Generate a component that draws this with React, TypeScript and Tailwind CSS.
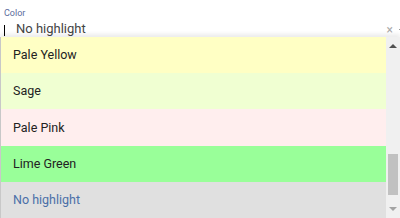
import { memo } from "react";

const options = [
  { label: "Pale Yellow", bg: "bg-[#ffffc4]" },
  { label: "Sage", bg: "bg-[#f0ffd2]" },
  { label: "Pale Pink", bg: "bg-[#ffeeee]" },
  { label: "Lime Green", bg: "bg-[#99ff99]" },
];

export default memo(function App() {
  return (
    <div className="relative h-[218px] w-[400px] overflow-hidden bg-white font-['Roboto',sans-serif]">
      {/* Field */}
      <div className="pl-1 pt-[7px]">
        <div className="text-[9px] leading-[12px] text-[#5b6b9b]">Color</div>
        <div className="flex h-[20px] items-center">
          <span className="mt-[2px] h-[11px] w-px bg-black" />
          <span className="ml-[11px] text-[13px] text-[#444]">No highlight</span>
          <span className="ml-auto mr-[6px] mt-[2px] text-[12px] leading-none text-[#aaa]">×</span>
          <span className="mt-[1px] h-px w-px bg-[#999]" />
        </div>
      </div>

      {/* Dropdown list */}
      <div className="absolute left-0 right-0 top-[37px] bottom-0 flex border-l border-[#c8c8c8] shadow-[0_-3px_4px_rgba(0,0,0,0.08)]">
        <div className="flex flex-1 flex-col">
          {options.map((o) => (
            <div
              key={o.label}
              className={`flex h-[36.25px] items-center pl-3 pt-px text-[12.5px] text-[#222] ${o.bg}`}
            >
              {o.label}
            </div>
          ))}
          <div className="flex h-[36.25px] items-center bg-[#e0e0e0] pl-3 pt-px text-[12.5px] text-[#4a6fa8]">
            No highlight
          </div>
        </div>

        {/* Scrollbar */}
        <div className="flex w-[14px] flex-col items-center bg-[#f0f0f0]">
          <div className="mt-[7px] h-0 w-0 border-x-[4px] border-b-[4px] border-x-transparent border-b-[#505050]" />
          <div className="flex-1" />
          <div className="mb-[12px] h-[41px] w-[10px] bg-[#c1c1c1]" />
          <div className="mb-[7px] h-0 w-0 border-x-[4px] border-t-[4px] border-x-transparent border-t-[#a3a3a3]" />
        </div>
      </div>
    </div>
  );
});
